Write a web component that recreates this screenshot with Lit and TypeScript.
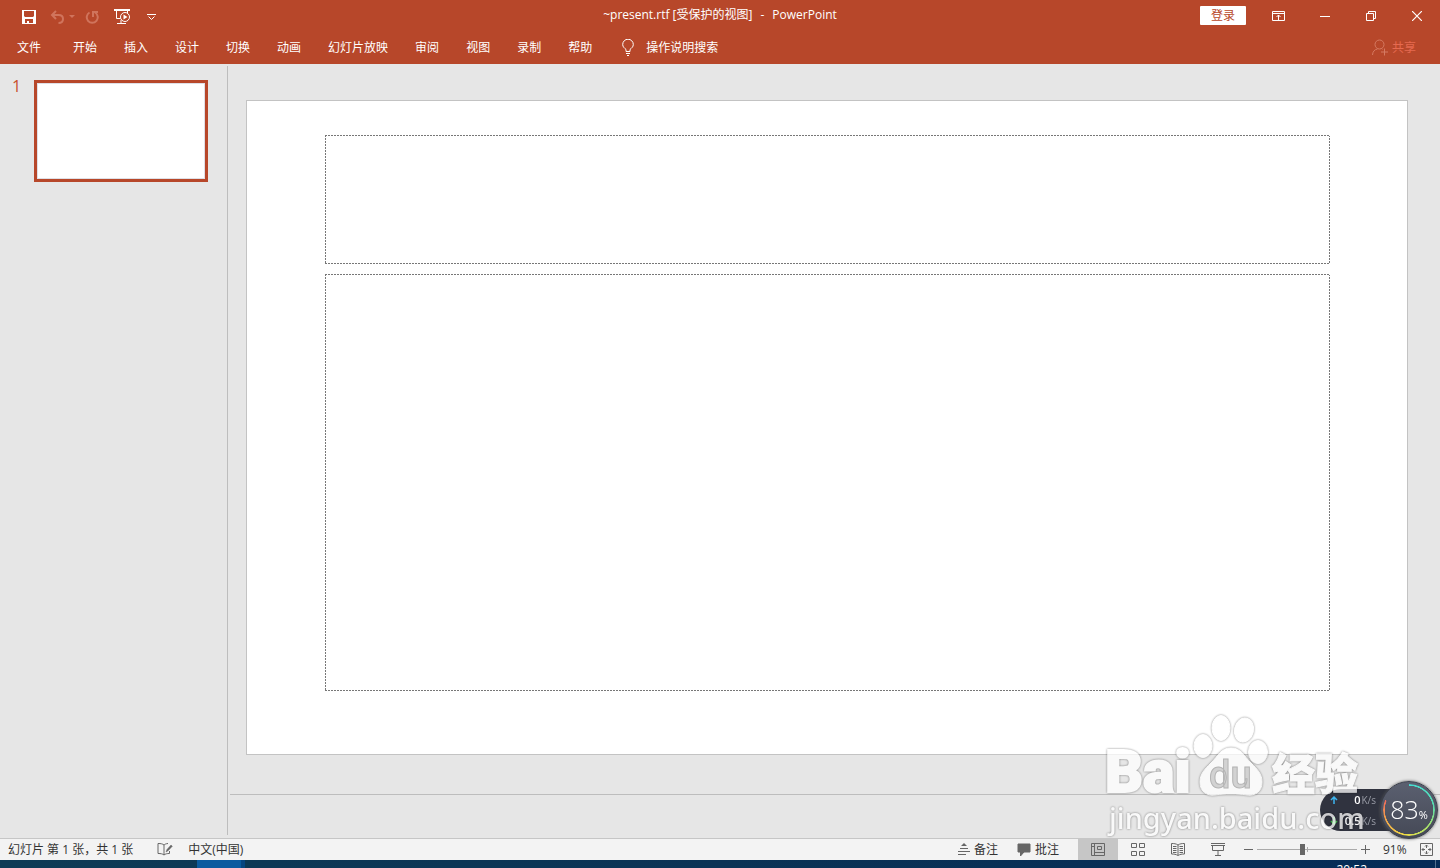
import { LitElement, html, css, svg } from "lit";
import { customElement, state } from "lit/decorators.js";

const tabs = ["开始", "插入", "设计", "切换", "动画", "幻灯片放映", "审阅", "视图", "录制", "帮助"];

const icon = (w: number, h: number, body: unknown) => html`<svg
  width=${w}
  height=${h}
  viewBox="0 0 ${w} ${h}"
  fill="none"
  stroke="currentColor"
  aria-hidden="true"
>${body}</svg>`;

const save = icon(14, 14, svg`<path d="M0 0h14v14H0z M2 1v5l1 1h8l1-1V1z M3 9v4h2v-2h2v2h4V9z" fill="currentColor" fill-rule="evenodd" stroke="none"/>`);
const undo = icon(15, 14, svg`<path d="M6 1L2 5l4 4M2 5h6.500c3 0 4.500 1.500 4.500 4s-1.500 4-4.500 4" stroke-width="2"/>`);
const redo = icon(14, 14, svg`<path d="M4.500 2.500A5.500 5.500 0 1 0 10 2.500M8 7V2h5" stroke-width="2"/>`);
const present = icon(17, 16, svg`<path d="M2.500 1v8.500h4M13.500 1v3M7 11v3M3 14.500h9"/><path d="M0 1h16" stroke-width="2"/><circle cx="11" cy="8" r="4.500"/><path d="M9.500 5.500v5l4-2.500z" fill="currentColor" stroke="none"/>`);
const more = icon(9, 8, svg`<path d="M0 1.500h9M1.500 3.500l3 3 3-3"/>`);
const caret = icon(6, 4, svg`<path d="M0 0h6l-3 3z" fill="currentColor" stroke="none"/>`);
const ribbon = icon(14, 10, svg`<path d="M.5.5h12v9H.5zM.5 2.500h12M6.500 4v5M4.500 6l2-2 2 2"/>`);
const minimize = icon(10, 10, svg`<path d="M0 5.500h10"/>`);
const restore = icon(10, 10, svg`<path d="M.5 2.500h7v7h-7zM2.500 2.500v-2h7v7h-2"/>`);
const close = icon(10, 10, svg`<path d="M0 0l10 10M10 0L0 10" stroke-width="1.200"/>`);
const bulb = icon(12, 17, svg`<path d="M4 12.500v-2C2.500 9 .7 8 .7 5.500a5 5 0 0 1 10.600 0C11.300 8 9.500 9 8 10.500v2zM4 14.500h4M5 16.500h2"/>`);
const person = icon(16, 17, svg`<circle cx="7.500" cy="5.500" r="4.500"/><path d="M.5 16c.2-3.500 2-5.500 5-6M12.500 9.500v7M9 13h7M9.500 9.500l1 .8"/>`);
const proof = icon(16, 13, svg`<path d="M7 2C5.500.8 4 .5 1 .5v10c3 0 4.500.3 6 1.500V2c1-.9 2-1.300 4-1.500M7 12c1.500-1.200 3-1.500 5.500-1.500V8"/><path d="M9 9l1-2.500 4-4.500 1.300 1.200-4.200 4.500z" fill="currentColor" stroke-width=".5"/>`);
const notes = icon(12, 13, svg`<path d="M2 5.500h8M0 8.500h12M0 11.500h8"/><path d="M6 0l3 3H3z" fill="currentColor" stroke="none"/>`);
const comment = icon(14, 14, svg`<path d="M1 1h12v8H7l-3.500 4V9H1z" fill="currentColor" stroke="currentColor" stroke-linejoin="round"/>`);
const normal = icon(14, 13, svg`<path d="M.5.500h13v12H.5zM3.500 1v11M3.500 9.500h10M6.500 3.500h4v3h-4zM1 3.500h2"/>`);
const sorter = icon(14, 13, svg`<path d="M.5.500h5v4h-5zM8.500.500h5v4h-5zM.5 8.500h5v4h-5zM8.500 8.500h5v4h-5z"/>`);
const reading = icon(14, 13, svg`<path d="M7 2C5 .7 3 .5.5.5v10.500c2.500 0 4.500.3 6.500 1.500 2-1.200 4-1.500 6.500-1.500V.5C11 .5 9 .7 7 2zM7 2v10M2 3.500h3.500M2 5.500h3.500M2 7.500h3.500M2 9.500h3.500M8.500 3.500H12M8.500 5.500H12M8.500 7.500H12M8.500 9.500H12"/>`);
const show = icon(14, 13, svg`<path d="M0 .5h14M0 2.500h14M1.500 3v4.500h11V3M7 8v4M4 12.500h6"/>`);
const fit = icon(13, 13, svg`<path d="M.5.500h12v12H.5z"/><path d="M6.500 2v3M6.500 8v3M2 6.500h3M8 6.500h3M5 3.500l1.500-1.500L8 3.500M5 9.500L6.500 11 8 9.500M3.500 5L2 6.500 3.500 8M9.500 5L11 6.500 9.500 8"/>`);

@customElement("app-root")
export class AppRoot extends LitElement {
  @state() private zoom = 45;

  static styles = css`
    :host {
      display: flex;
      flex-direction: column;
      min-height: 100vh;
      background: #e6e6e6;
      color: #333;
      font: 12px/16px "Open Sans", "Noto Sans CJK SC", sans-serif;
    }
    * { box-sizing: border-box; }
    svg { display: block; flex: none; }
    button {
      display: flex;
      align-items: center;
      border: 0;
      margin: 0;
      padding: 0;
      background: none;
      color: inherit;
      font: inherit;
      white-space: nowrap;
    }
    .header { background: #b7472a; color: #fff; }
    .titlebar {
      display: grid;
      grid-template-columns: 1fr auto 1fr;
      align-items: center;
      height: 31px;
    }
    .quick { display: flex; align-items: center; padding: 2px 0 0 22px; }
    .quick .undo { gap: 4px; margin: 0 10px 0 14px; }
    .quick .dim { color: #d0745c; }
    .quick .present { margin: 0 16px 0 15px; }
    .title {
      display: flex;
      gap: 8px;
      margin: 0;
      padding-bottom: 1px;
      font-size: 12px;
      font-weight: 400;
      white-space: nowrap;
    }
    .window { display: flex; align-items: center; justify-content: flex-end; }
    .login {
      height: 19px;
      padding: 0 11px;
      margin-right: 10px;
      border-radius: 1px;
      background: #fff;
      color: #b7472a;
    }
    .win { width: 46px; height: 30px; justify-content: center; }
    .tabs { display: flex; align-items: center; height: 33px; padding: 0 24px 0 17px; gap: 27px; }
    .file { margin-right: 5px; }
    .tell { gap: 12px; margin-left: 3px; }
    .share { gap: 4px; margin-left: auto; color: #e66a50; }
    .share svg { color: #d57a62; }

    .workspace { flex: 1; display: flex; }
    .panel {
      width: 228px;
      flex: none;
      margin: 2px 0 3px;
      padding-top: 14px;
      border-right: 1px solid #bdbdbd;
    }
    .thumb { width: 100%; align-items: flex-start; color: #c8502f; text-align: left; }
    .number { width: 34px; padding-left: 12px; font-size: 16px; line-height: 12px; }
    .preview {
      width: 174px;
      aspect-ratio: 174 / 102;
      background: #fff;
      border: 3px solid #b7472a;
      box-shadow: inset 0 0 0 1px #dfdfe6;
    }
    .editor { flex: 1; min-width: 0; display: flex; flex-direction: column; }
    .stage { flex: 1; display: flex; padding: 36px 32px 39px 18px; }
    .slide {
      flex: 1;
      display: grid;
      grid-template-rows: 129fr 417fr;
      gap: 10px;
      padding: 34px 77px 63px 78px;
      background: #fff;
      border: 1px solid #c3c3c3;
    }
    .placeholder {
      --h: repeating-linear-gradient(90deg, #777 0 2px, #fff 2px 3px);
      --v: repeating-linear-gradient(180deg, #777 0 2px, #fff 2px 3px);
      background: var(--h) top / 100% 1px, var(--h) bottom / 100% 1px,
        var(--v) left / 1px 100%, var(--v) right / 1px 100%;
      background-repeat: no-repeat;
    }
    .notes-pane { height: 44px; margin-left: 2px; border-top: 1px solid #bdbdbd; }

    .status {
      display: flex;
      align-items: center;
      height: 22px;
      padding: 0 7px 0 8px;
      background: #f3f3f3;
      border-top: 1px solid #c6c6c6;
    }
    .status svg { color: #666; }
    .count { margin-right: 24px; white-space: nowrap; }
    .lang { margin-left: 15px; }
    .right { display: flex; align-items: center; margin-left: auto; height: 100%; }
    .label { gap: 4px; margin-right: 19px; }
    .view { width: 40px; height: 100%; justify-content: center; }
    .view.on { background: #c6c6c6; }
    .step { width: 9px; justify-content: center; }
    .views { display: flex; height: 100%; margin-right: 6px; }
    .slider { position: relative; display: flex; width: 100px; margin: 0 4px; }
    .slider::after {
      content: "";
      position: absolute;
      left: 50%;
      top: 5px;
      width: 1px;
      height: 5px;
      background: #aaa;
    }
    .range {
      appearance: none;
      width: 100%;
      height: 15px;
      margin: 0;
      background: linear-gradient(#aaa, #aaa) center / 100% 1px no-repeat;
    }
    .range::-webkit-slider-thumb { appearance: none; width: 5px; height: 11px; background: #666; }
    .percent { width: 25px; margin: 0 12px 0 13px; }

    .taskbar {
      display: flex;
      height: 8px;
      overflow: hidden;
      background: linear-gradient(90deg, #0d3b55, #0a3355 50%, #052b57);
      color: #fff;
    }
    .task { width: 48px; margin-left: 197px; background: #0a5b9f; border-right: 4px solid #064580; }
    .clock { margin: 2px 68px 0 auto; }
    .desktop { width: 5px; border-left: 1px solid #53708f; }

    .monitor {
      position: fixed;
      right: 2px;
      bottom: 29px;
      display: flex;
      align-items: center;
      color: #fff;
    }
    .speeds {
      width: 89px;
      height: 42px;
      margin-right: -29px;
      padding: 0 33px 0 9px;
      border-radius: 21px 0 0 21px;
      background: #30333f;
      font-size: 11px;
    }
    .speed {
      display: flex;
      align-items: center;
      height: 21px;
      gap: 1px;
      justify-content: flex-end;
      font-weight: 600;
    }
    .speed svg { margin-right: auto; }
    .unit { font-weight: 400; font-size: 10px; color: #999ca6; }
    .dial {
      position: relative;
      display: flex;
      align-items: baseline;
      justify-content: center;
      width: 58px;
      height: 58px;
      border-radius: 50%;
      background: linear-gradient(#5b6070, #454956);
      border: 1px solid #3c404c;
      box-shadow: 0 0 3px #555;
      font-size: 25px;
      line-height: 54px;
      font-weight: 300;
    }
    .dial::before {
      content: "";
      position: absolute;
      inset: 2px;
      border-radius: 50%;
      background: conic-gradient(#45ddd2 0deg, #58ddb0 80deg, #a6e36b 130deg, #f0dc45 190deg, #f5a34a 250deg, #ef6b5c 292deg, transparent 293deg);
      mask: radial-gradient(closest-side, transparent 92%, #000 94%);
    }
    .pct { font-size: 11px; font-weight: 400; }
    .watermark { position: fixed; right: 70px; bottom: 24px; pointer-events: none; }
    .mark {
      fill: #fff;
      stroke: #fff;
      opacity: 0.75;
      filter: drop-shadow(0 0 1px rgba(0, 0, 0, 0.6));
    }
    .brand { font: 900 59px Roboto, sans-serif; stroke-width: 2; }
    .cn { font: 900 43px "Noto Sans CJK SC", sans-serif; stroke-width: 1; }
    .url { font: 500 29px "Noto Sans", sans-serif; stroke-width: 0; }
    .du { font: 500 38px Roboto, sans-serif; fill: #d2d2d2; stroke: #b4b4b4; stroke-width: 1; }
  `;

  private onZoom(e: Event) {
    this.zoom = Number((e.target as HTMLInputElement).value);
  }

  render() {
    return html`
      <header class="header">
        <div class="titlebar">
          <div class="quick">
            <button aria-label="保存">${save}</button>
            <button class="undo dim" aria-label="撤消">${undo}${caret}</button>
            <button class="dim" aria-label="重复">${redo}</button>
            <button class="present" aria-label="从头开始">${present}</button>
            <button aria-label="自定义快速访问工具栏">${more}</button>
          </div>
          <h1 class="title"><span>~present.rtf [受保护的视图]</span><span>-</span><span>PowerPoint</span></h1>
          <div class="window">
            <button class="login">登录</button>
            <button class="win" aria-label="功能区显示选项">${ribbon}</button>
            <button class="win" aria-label="最小化">${minimize}</button>
            <button class="win" aria-label="还原">${restore}</button>
            <button class="win" aria-label="关闭">${close}</button>
          </div>
        </div>
        <nav class="tabs">
          <button class="file">文件</button>
          ${tabs.map((t) => html`<button>${t}</button>`)}
          <button class="tell">${bulb}操作说明搜索</button>
          <button class="share">${person}共享</button>
        </nav>
      </header>
      <main class="workspace">
        <aside class="panel">
          <button class="thumb" aria-label="幻灯片 1">
            <span class="number">1</span><span class="preview"></span>
          </button>
        </aside>
        <section class="editor">
          <div class="stage">
            <div class="slide">
              <div class="placeholder"></div>
              <div class="placeholder"></div>
            </div>
          </div>
          <div class="notes-pane"></div>
        </section>
      </main>
      <footer class="status">
        <span class="count">幻灯片 第 1 张，共 1 张</span>
        <button aria-label="拼写检查">${proof}</button>
        <button class="lang">中文(中国)</button>
        <div class="right">
          <button class="label">${notes}备注</button>
          <button class="label">${comment}批注</button>
          <div class="views">
            <button class="view on" aria-label="普通视图">${normal}</button>
            <button class="view" aria-label="幻灯片浏览">${sorter}</button>
            <button class="view" aria-label="阅读视图">${reading}</button>
            <button class="view" aria-label="幻灯片放映">${show}</button>
          </div>
          <button class="step" aria-label="缩小">${icon(9, 9, svg`<path d="M0 4.500h9"/>`)}</button>
          <div class="slider">
            <input class="range" type="range" aria-label="缩放" min="0" max="100" .value=${String(this.zoom)} @input=${this.onZoom} />
          </div>
          <button class="step" aria-label="放大">${icon(9, 9, svg`<path d="M0 4.500h9M4.500 0v9"/>`)}</button>
          <button class="percent">91%</button>
          <button aria-label="适应窗口">${fit}</button>
        </div>
      </footer>
      <div class="taskbar">
        <div class="task"></div>
        <span class="clock">20:52</span>
        <div class="desktop"></div>
      </div>

      <div class="monitor">
        <div class="speeds">
          <div class="speed">
            <svg width="10" height="8" viewBox="0 0 10 8"><path d="M5 8V1M2 4l3-3 3 3" fill="none" stroke="#3db4ef" stroke-width="1.500"/></svg>
            0<span class="unit">K/s</span>
          </div>
          <div class="speed">
            <svg width="10" height="8" viewBox="0 0 10 8"><path d="M5 0v7M2 4l3 3 3-3" fill="none" stroke="#3fc44d" stroke-width="1.500"/></svg>
            0.5<span class="unit">K/s</span>
          </div>
        </div>
        <div class="dial">83<span class="pct">%</span></div>
      </div>

      <svg class="watermark" width="270" height="134" viewBox="0 0 270 134">
        <g class="mark">
          <text class="brand" x="5" y="82">Bai</text>
          <text class="cn" x="172" y="80">经验</text>
          <text class="url" x="9" y="119">jingyan.baidu.com</text>
          <ellipse cx="103" cy="36" rx="9" ry="11.500" />
          <ellipse cx="121" cy="18" rx="9" ry="12.500" />
          <ellipse cx="144" cy="20" rx="9.500" ry="12" transform="rotate(12 144 20)" />
          <ellipse cx="158" cy="42" rx="9.500" ry="11.500" />
          <path d="M131 38c10 0 13 8 20 15s11 11 11 19c0 10-7 14-15 13-6-1-10-1-16-1s-10 0-16 1c-8 1-15-3-15-13 0-8 4-12 11-19s10-15 20-15z" />
        </g>
        <text class="du" x="109" y="78">du</text>
      </svg>
    `;
  }
}
